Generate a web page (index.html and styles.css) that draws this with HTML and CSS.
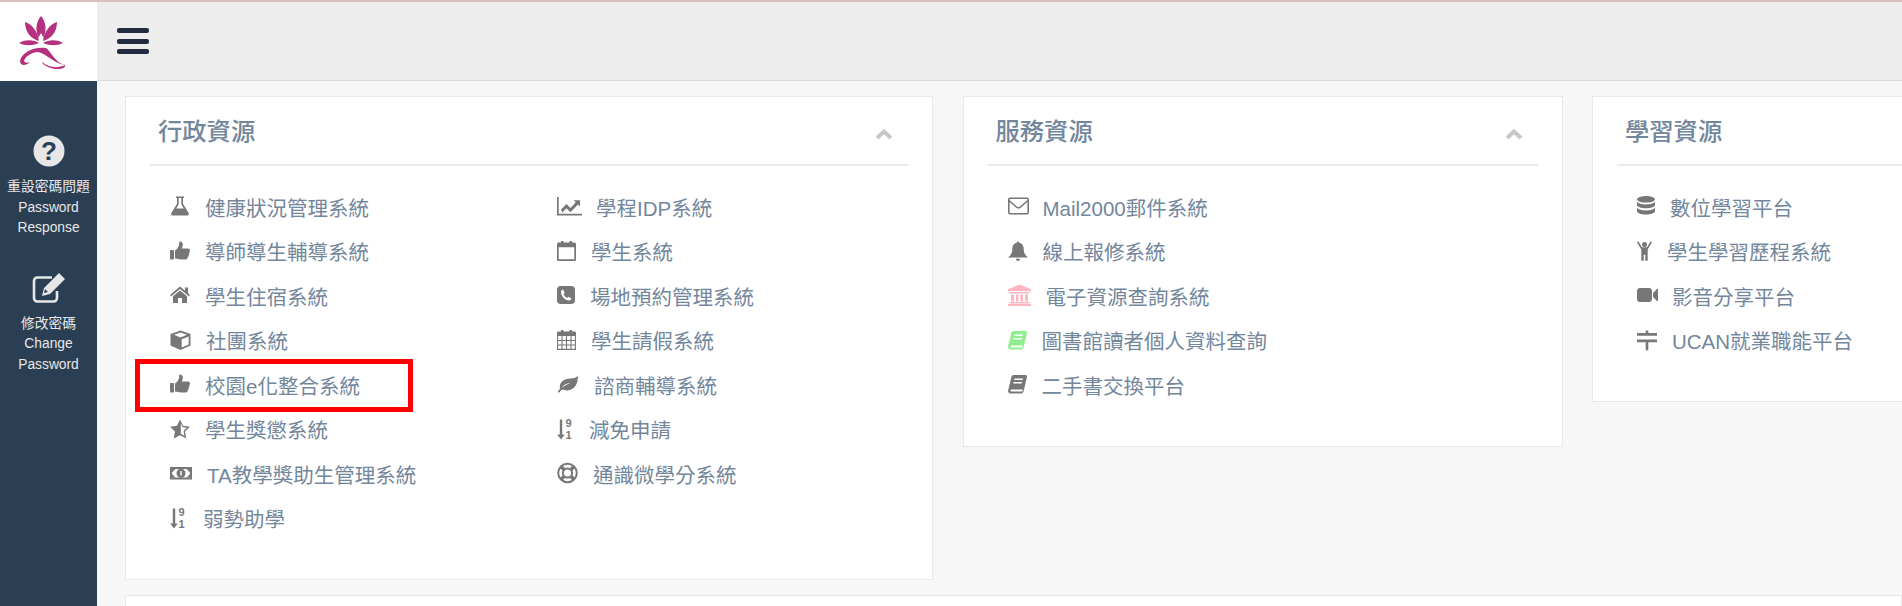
FILE: index.html
```html
<!DOCTYPE html>
<html lang="zh-Hant">
<head>
    <meta charset="UTF-8">
    <title>校務資訊入口</title>
    <link rel="stylesheet" href="styles.css">
</head>
<body>
    <!-- icon sheet -->
    <svg class="sprites" aria-hidden="true">
        <symbol id="flask" viewBox="0 0 19 24"><path fill-rule="evenodd" d="M5.5 2.5h8v1.600h-1v5.600l5.600 9.200c.8 1.400 0 2.600-1.400 2.600H2.300c-1.400 0-2.200-1.200-1.400-2.600L6.500 9.700V4.100h-1zM8.200 4.100v6.100L5.700 14.500h7.600l-2.500-4.300V4.100z"/></symbol>
        <symbol id="thumb" viewBox="0 0 20 24"><rect x="0" y="11" width="4" height="9.500" rx=".8"/><path d="M5 11.500c2-1 3.500-3.500 4-5.500.2-1 .3-2.500.3-3.500 2-.5 3.700 1 3.500 3.500-.1 1.300-.6 2.300-1 3.500h6.200c1.200 0 2 .9 2 2 0 .7-.3 1.200-.7 1.600.4 1.200.1 2-.6 2.600.2 1-.1 1.800-.9 2.400.1 1.300-.7 2.400-2.300 2.400H11c-2 0-4-.8-6-1z"/></symbol>
        <symbol id="home" viewBox="0 0 20 24"><path d="M10 3.500 15 7.700V4.500h3v5.700l2 1.800-1.200 1.300L10 6 1.200 13.300 0 12z"/><path d="M10 7.500 17 13.300V20h-5v-5H8v5H3v-6.700z"/></symbol>
        <symbol id="cube" viewBox="0 0 21 24"><path fill-rule="evenodd" d="M10.500 2.500 20.500 6v11.500l-10 4.500-10-4.500V6zM10.500 4.400 4 6.800l6.500 2.600L17 6.800zM11.700 11.200v8.400l7-3.200V8.600z"/></symbol>
        <symbol id="star" viewBox="0 0 20 24"><path fill-rule="evenodd" d="M10 2.500l3 6.300 7 .9-5 4.900 1.200 6.900-6.200-3.300-6.200 3.300L5 14.600 0 9.700l7-.9zM10.800 6.500v10.300l3.500 2-.7-4.900 3.100-3.100-4.300-.8z"/></symbol>
        <symbol id="money" viewBox="0 0 22 24"><path fill-rule="evenodd" d="M0 6h22v12.500H0zM2 8v8.500h18V8z"/><path d="M2 8h3.500L2 11.500zM20 8h-3.500l3.500 3.500zM2 16.500h3.500L2 13zM20 16.500h-3.500L20 13z"/><path fill-rule="evenodd" d="M11 7.800a4.500 4.500 0 1 1 0 9 4.500 4.500 0 0 1 0-9zM10.300 10v4.500h1.400V10z"/></symbol>
        <symbol id="sortnum" viewBox="0 0 18 24"><path d="M2.800 2.500h2.400v15h2.600L4 22.500.2 17.500h2.600z"/><text x="8.400" y="10" class="digit">9</text><text x="8.400" y="21.800" class="digit">1</text></symbol>
        <symbol id="chart" viewBox="0 0 25 24"><path d="M0 3h1.700v16.800H25v1.700H0z"/><path d="M4 15.500l5.500-5.500 4 4 5.200-5.700-2-2h6.300v6.200l-2-2-7.500 7.800-4-4-4.300 4.300z"/></symbol>
        <symbol id="calo" viewBox="0 0 19 24"><path fill-rule="evenodd" d="M4 3.500V2h2.500v1.500h6V2H15v1.500h2.500c.9 0 1.500.7 1.500 1.500v15.500c0 .8-.6 1.500-1.500 1.500h-16C.6 22 0 21.300 0 20.500V5c0-.8.6-1.500 1.500-1.500zM1.700 8.200v12.100h15.600V8.200z"/></symbol>
        <symbol id="phone" viewBox="0 0 18 24"><path fill-rule="evenodd" d="M3.500 3h11C16.500 3 18 4.500 18 6.500v11c0 2-1.500 3.500-3.500 3.500h-11C1.500 21 0 19.500 0 17.500v-11C0 4.500 1.500 3 3.500 3zM6 6.500c-1 .3-2 1.200-2 2.500 0 4 3.500 8 8 8.500 1.300 0 2.300-1 2.500-2l-3-1.800-1.300 1.300c-1.500-.7-3-2.200-3.700-3.700l1.300-1.300z"/></symbol>
        <symbol id="cal" viewBox="0 0 19 24"><path d="M4 3.500V2h2.500v1.500h6V2H15v1.500h2.500c.9 0 1.500.7 1.500 1.500v3H0V5c0-.8.6-1.500 1.500-1.500z"/><path fill="none" stroke="currentColor" stroke-width="1.100" d="M.6 8v13.400h17.800V8M.6 12.500h17.800M.6 17h17.800M5 8v13M9.500 8v13M14 8v13"/></symbol>
        <symbol id="leaf" viewBox="0 0 21 24"><path fill-rule="evenodd" d="M21 4c-.3 6-1.500 12-8 14-3 .9-6 .3-7.800-.7L2 20.500.5 20.200 3 16.500C1.500 10 8 6.500 13 6.500c3.500 0 6-.8 8-2.500zM14 10.500C10 11 6.500 13 4.500 16c3-2.200 6-4 9.500-5.500z"/></symbol>
        <symbol id="ring" viewBox="0 0 21 24"><circle cx="10.500" cy="12" r="9.300" fill="none" stroke="currentColor" stroke-width="2"/><circle cx="10.500" cy="12" r="4.600" fill="none" stroke="currentColor" stroke-width="2"/><path fill="none" stroke="currentColor" stroke-width="3.600" d="M4.200 5.700l3 3M16.800 5.700l-3 3M4.200 18.300l3-3M16.800 18.300l-3-3"/></symbol>
        <symbol id="mail" viewBox="0 0 21 24"><path fill="none" stroke="currentColor" stroke-width="1.600" d="M2 4.300h17c.7 0 1.200.5 1.200 1.200v13c0 .7-.5 1.200-1.200 1.200H2c-.7 0-1.200-.5-1.200-1.200v-13c0-.7.5-1.200 1.200-1.200zM1 6.500l7.500 6.500c1.200 1 2.800 1 4 0L20 6.500"/></symbol>
        <symbol id="bell" viewBox="0 0 20 24"><path d="M10 2.500c.7 0 1.200.5 1.200 1.200 3 .6 4.500 3 4.500 6 0 4 1 6 4.300 8.800H0c3.300-2.800 4.300-4.800 4.300-8.800 0-3 1.500-5.400 4.500-6 0-.7.5-1.200 1.200-1.200zM7.800 19.800h4.400c0 1.200-1 2.200-2.200 2.200s-2.200-1-2.200-2.200z"/></symbol>
        <symbol id="bank" viewBox="0 0 23 24"><path d="M11.500 1.500 23 6.300V8H0V6.300zM1.500 9h20v1.500h-20zM3 11.500h3v7H3zM8 11.500h2.500v7H8zM12.500 11.500H15v7h-2.500zM17 11.500h3v7h-3zM1.500 19h20v1.500h-20zM0 21h23v2H0z"/></symbol>
        <symbol id="book" viewBox="0 0 19 24"><path fill-rule="evenodd" d="M5.500 3h11.800c1.300 0 1.900 1 1.600 2.200l-3.300 14c-.4 1.400-1.500 2.300-3 2.300H2.500C.8 21.500-.3 20 .2 18.200L3.400 5C3.700 3.800 4.500 3 5.500 3zM6.500 6.500l-.4 1.400h8.500l.4-1.400zM5.600 10l-.4 1.400h8.500l.4-1.400zM2.600 18c-.3.9.1 1.600 1.100 1.600h9.600c.8 0 1.200-.5 1.400-1.100l.2-.9H4.200c-.8 0-1.400 0-1.600.4z"/></symbol>
        <symbol id="db" viewBox="0 0 18 24"><ellipse cx="9" cy="5.300" rx="9" ry="3.300"/><path d="M0 7.800c1.500 1.800 5 2.600 9 2.600s7.500-.8 9-2.600v3.200c0 1.800-4 3.300-9 3.300S0 12.800 0 11zM0 13.800c1.500 1.800 5 2.600 9 2.600s7.500-.8 9-2.600v3.400c0 1.800-4 3.300-9 3.300s-9-1.500-9-3.300z"/></symbol>
        <symbol id="child" viewBox="0 0 15 24"><circle cx="7.500" cy="5.500" r="2.500"/><path d="M1.300 2.300 5 8.300h5l3.700-6 1.300.9-4.300 7.300v11.300H8.300v-6H6.700v6H4.300V10.500L0 3.200z"/></symbol>
        <symbol id="video" viewBox="0 0 21 24"><path d="M3 5h9c1.700 0 3 1.300 3 3v8c0 1.700-1.300 3-3 3H3c-1.700 0-3-1.300-3-3V8c0-1.700 1.300-3 3-3zM16 10l4-4c.5-.4 1-.2 1 .5v11c0 .7-.5.9-1 .5l-4-4z"/></symbol>
        <symbol id="signs" viewBox="0 0 20 24"><path d="M8.700 2.500h2.600V5H20v2.700H0V5h8.700zM0 11.500h20v2.700h-8.700v8H8.700v-8H0z"/></symbol>
    </svg>

    <div class="app">
        <aside class="sidebar">
            <div class="logo">
                <svg width="46" height="54" viewBox="0 0 46 54">
                    <g class="lotus">
                        <path d="M22 1c5 6 6 14 2.500 21.500L22 18l-2.500 4.500C16 15 17 7 22 1z"/>
                        <path d="M6 7c7 2 13 10 14 19C12 24 6 17 6 7zM38 7c-7 2-13 10-14 19 8-2 14-9 14-19z"/>
                        <path d="M0 28c7-4 15-3 20 0-7 3-14 3-20 0zM44 28c-7-4-15-3-20 0 7 3 14 3 20 0z"/>
                        <path d="M27 33C15 31 2 38 1 46c0 5 6 5 10 1-3 1-5 1-6-1 1-5 9-9 14-9 9 2 15 11 27 13-8 4-17 2-23-3-1 2 9 8 17 7 4 0 7-2 6-4C36 48 32 36 27 33z"/>
                    </g>
                </svg>
            </div>
            <nav class="side-menu">
                <a class="side-item">
                    <svg class="side-icon" viewBox="0 0 36 36">
                        <circle cx="18" cy="18" r="15.500" class="side-fill"/>
                        <text x="18" y="27" class="qmark">?</text>
                    </svg>
                    <span>重設密碼問題</span>
                    <span>Password</span>
                    <span>Response</span>
                </a>
                <a class="side-item">
                    <svg class="side-icon" viewBox="0 0 36 36">
                        <path class="side-line" d="M26 21v7c0 2-1.500 3.500-3.500 3.500H6.500C4.500 31.500 3 30 3 28V11c0-2 1.500-3.500 3.500-3.500H21"/>
                        <path class="side-fill" d="M28 3l6 6-15 15-8 2 2-8zM14 19l-1 4 4-1z"/>
                    </svg>
                    <span>修改密碼</span>
                    <span>Change</span>
                    <span>Password</span>
                </a>
            </nav>
        </aside>

        <div class="page">
            <header class="topbar">
                <button class="menu-toggle"><span></span><span></span><span></span></button>
            </header>
            <main class="content">
                <div class="panels">
                    <section class="panel panel-wide">
                        <div class="panel-title">
                            <h2>行政資源</h2>
                            <svg class="collapse" width="18" height="11" viewBox="0 0 18 11"><path d="M2 9l7-6.500L16 9"/></svg>
                        </div>
                        <div class="lists">
                            <ul class="links">
                                <li><svg class="ic w20"><use href="#flask"/></svg>健康狀況管理系統</li>
                                <li><svg class="ic w20"><use href="#thumb"/></svg>導師導生輔導系統</li>
                                <li><svg class="ic w20"><use href="#home"/></svg>學生住宿系統</li>
                                <li><svg class="ic w21"><use href="#cube"/></svg>社團系統</li>
                                <li class="marked"><svg class="ic w20"><use href="#thumb"/></svg>校園e化整合系統</li>
                                <li><svg class="ic w20"><use href="#star"/></svg>學生獎懲系統</li>
                                <li><svg class="ic w22"><use href="#money"/></svg>TA教學獎助生管理系統</li>
                                <li><svg class="ic w18"><use href="#sortnum"/></svg>弱勢助學</li>
                            </ul>
                            <ul class="links">
                                <li><svg class="ic w25 tighter"><use href="#chart"/></svg>學程IDP系統</li>
                                <li><svg class="ic w19"><use href="#calo"/></svg>學生系統</li>
                                <li><svg class="ic w18"><use href="#phone"/></svg>場地預約管理系統</li>
                                <li><svg class="ic w19"><use href="#cal"/></svg>學生請假系統</li>
                                <li><svg class="ic w21 tight"><use href="#leaf"/></svg>諮商輔導系統</li>
                                <li><svg class="ic w18 tighter"><use href="#sortnum"/></svg>減免申請</li>
                                <li><svg class="ic w21"><use href="#ring"/></svg>通識微學分系統</li>
                            </ul>
                        </div>
                    </section>

                    <section class="panel">
                        <div class="panel-title">
                            <h2>服務資源</h2>
                            <svg class="collapse" width="18" height="11" viewBox="0 0 18 11"><path d="M2 9l7-6.500L16 9"/></svg>
                        </div>
                        <ul class="links">
                            <li><svg class="ic w21 tighter"><use href="#mail"/></svg>Mail2000郵件系統</li>
                            <li><svg class="ic w20"><use href="#bell"/></svg>線上報修系統</li>
                            <li><svg class="ic w23 pink"><use href="#bank"/></svg>電子資源查詢系統</li>
                            <li><svg class="ic w19 green"><use href="#book"/></svg>圖書館讀者個人資料查詢</li>
                            <li><svg class="ic w19"><use href="#book"/></svg>二手書交換平台</li>
                        </ul>
                    </section>

                    <section class="panel">
                        <div class="panel-title">
                            <h2>學習資源</h2>
                            <svg class="collapse" width="18" height="11" viewBox="0 0 18 11"><path d="M2 9l7-6.500L16 9"/></svg>
                        </div>
                        <ul class="links">
                            <li><svg class="ic w18"><use href="#db"/></svg>數位學習平台</li>
                            <li><svg class="ic w15"><use href="#child"/></svg>學生學習歷程系統</li>
                            <li><svg class="ic w21 tighter"><use href="#video"/></svg>影音分享平台</li>
                            <li><svg class="ic w20"><use href="#signs"/></svg>UCAN就業職能平台</li>
                        </ul>
                    </section>
                </div>
                <section class="panel panel-next"></section>
            </main>
        </div>
    </div>
</body>
</html>
```

FILE: styles.css
```css
:root {
    --sidebar: #2a3f54;
    --text: #73879c;
    --icon: #777;
    --line: #e6e9ed;
    --topbar: #ededed;
    --background: #f7f7f7;
}
* {
    box-sizing: border-box;
}
html, body {
    height: 100%;
}
body {
    margin: 0;
    overflow: hidden;
    border-top: 2px solid #d9bfbd;
    background: var(--background);
    color: var(--text);
    font-family: "Liberation Sans", "Noto Sans CJK TC", sans-serif;
}
.sprites {
    display: none;
}
.app {
    display: flex;
    height: 100%;
}

/* sidebar */
.sidebar {
    flex: 0 0 97px;
    background: var(--sidebar);
}
.logo {
    display: flex;
    justify-content: center;
    align-items: center;
    height: 79px;
    padding-right: 14px;
    background: white;
}
.lotus {
    fill: #b5317f;
}
.side-menu {
    padding-top: 52px;
}
.side-item {
    display: flex;
    flex-direction: column;
    align-items: center;
    margin-bottom: 31px;
    color: #e7e7e7;
    font-size: 13.8px;
    line-height: 20.6px;
}
.side-icon {
    width: 36px;
    height: 36px;
    margin-bottom: 8px;
}
.side-fill {
    fill: #e7e7e7;
}
.side-line {
    fill: none;
    stroke: #e7e7e7;
    stroke-width: 2.6;
}
.qmark {
    fill: var(--sidebar);
    font-size: 26px;
    font-weight: bold;
    text-anchor: middle;
}

/* top bar */
.page {
    flex: 1;
    min-width: 0;
}
.topbar {
    display: flex;
    align-items: center;
    height: 79px;
    padding-left: 20px;
    background: var(--topbar);
    border-bottom: 1px solid #d9dee4;
}
.menu-toggle {
    display: flex;
    flex-direction: column;
    gap: 5.5px;
    width: 32px;
    padding: 0;
    border: none;
    background: none;
}
.menu-toggle span {
    height: 5px;
    border-radius: 2px;
    background: #222b40;
}

/* panels */
.content {
    padding: 15px 0 0 28px;
}
.panels {
    display: flex;
    align-items: flex-start;
    gap: 29.500px;
}
.panel {
    flex: 0 0 600px;
    padding: 0 24px 38.500px;
    background: white;
    border: 1px solid var(--line);
}
.panel-wide {
    flex-basis: 808px;
}
.panel-title {
    display: flex;
    justify-content: space-between;
    align-items: center;
    height: 69px;
    padding: 0 15px 0 8px;
    border-bottom: 2px solid var(--line);
}
.panel-title h2 {
    margin: 0 0 3px;
    font-size: 24.3px;
    font-weight: 500;
}
.collapse {
    margin-top: 7px;
    fill: none;
    stroke: #c5c7cb;
    stroke-width: 4;
}
.lists {
    display: flex;
}
.lists .links:first-child {
    flex: 0 0 387px;
}
.links {
    margin: 0;
    padding: 18.500px 0 0 20px;
    list-style: none;
    font-size: 20.5px;
}
.links li {
    display: flex;
    align-items: center;
    gap: 15px;
    height: 44.500px;
    white-space: nowrap;
}
.marked {
    position: relative;
}
.marked::after {
    content: "";
    position: absolute;
    left: -35px;
    top: -4px;
    box-sizing: border-box;
    width: 278px;
    height: 53px;
    border: 5px solid #f00;
}

/* icons */
.ic {
    flex: none;
    height: 24px;
    margin-top: -1px;
    color: var(--icon);
    fill: currentColor;
}
.w15 { width: 15px; }
.w18 { width: 18px; }
.w19 { width: 19px; }
.w20 { width: 20px; }
.w21 { width: 21px; }
.w22 { width: 22px; }
.w23 { width: 23px; }
.w25 { width: 25px; }
.tight { margin-right: 1px; }
.tighter { margin-right: -1px; }
.pink { color: #ffb6c1; }
.green { color: #90ee90; }
.digit {
    font-family: "Liberation Sans", sans-serif;
    font-size: 11px;
    font-weight: bold;
}
.panel-next {
    height: 200px;
    margin-top: 15px;
}
```
